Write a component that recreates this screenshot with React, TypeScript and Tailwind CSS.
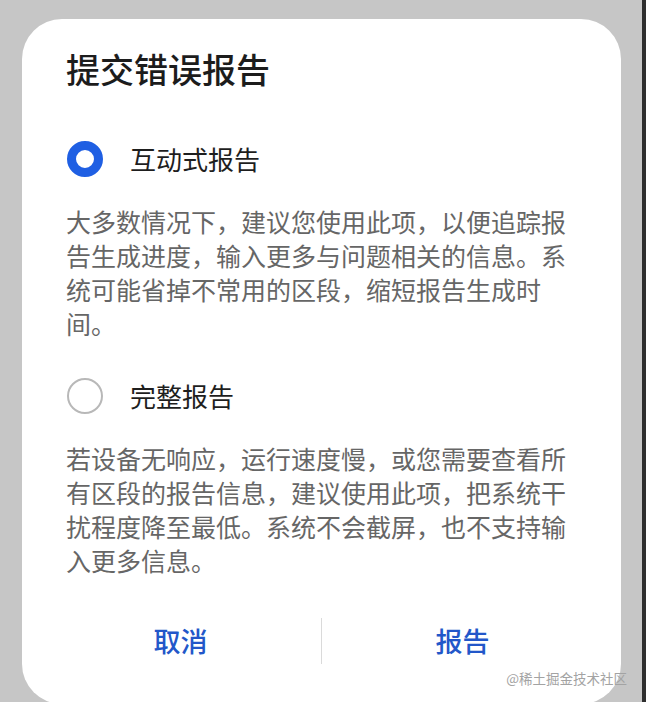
import React, { useState } from "react";

const FONT = { fontFamily: '"Noto Sans CJK SC", "Noto Sans", sans-serif' };

type Option = {
  id: string;
  label: string;
  desc: string;
};

const OPTIONS: Option[] = [
  {
    id: "interactive",
    label: "互动式报告",
    desc: "大多数情况下，建议您使用此项，以便追踪报告生成进度，输入更多与问题相关的信息。系统可能省掉不常用的区段，缩短报告生成时间。",
  },
  {
    id: "full",
    label: "完整报告",
    desc: "若设备无响应，运行速度慢，或您需要查看所有区段的报告信息，建议使用此项，把系统干扰程度降至最低。系统不会截屏，也不支持输入更多信息。",
  },
];

// Radio circle: blue ring when picked, thin grey outline otherwise
function Radio({ checked }: { checked: boolean }) {
  return checked ? (
    <span className="ml-px box-border h-[36px] w-[36px] shrink-0 rounded-full border-[9px] border-[#1f5fe3] bg-white" />
  ) : (
    <span className="ml-px box-border h-[36px] w-[36px] shrink-0 rounded-full border-2 border-[#b8b8b8] bg-white" />
  );
}

export default function App() {
  const [selected, setSelected] = useState("interactive");

  return (
    <div className="relative flex h-[702px] w-[646px] overflow-hidden bg-[#c6c6c6]" style={FONT}>
      <div className="flex flex-1 flex-col">
        {/* divider of the list underneath the dialog */}
        <div className="ml-[43px] mt-[4px] h-px w-[557px] bg-[#b0b0b0]" />

        <div className="ml-[22px] mt-[15px] flex h-[685px] w-[599px] shrink-0 flex-col rounded-[40px] bg-white px-[44px] pt-[29px]">
          <h1 className="text-[34px] font-medium leading-[41px] text-[#1c1c1c]">提交错误报告</h1>

          {OPTIONS.map((opt, i) => (
            <div key={opt.id} className={i === 0 ? "mt-[42px]" : "mt-[28px]"}>
              <button
                type="button"
                onClick={() => setSelected(opt.id)}
                className="flex h-[56px] w-full items-center text-left"
              >
                <Radio checked={selected === opt.id} />
                <span className="ml-[27px] text-[26px] leading-[34px] text-[#1e1e1e]">{opt.label}</span>
              </button>
              <p className="mt-[17px] text-[25px] leading-[34px] text-[#666666]">{opt.desc}</p>
            </div>
          ))}

          <div className="-mx-[26px] mt-[36px] flex h-[56px] items-center">
            <button type="button" className="flex-1 text-[27px] font-medium text-[#2257c9]">
              取消
            </button>
            <div className="h-[46px] w-px bg-[#dadada]" />
            <button type="button" className="flex-1 text-[27px] font-medium text-[#2257c9]">
              报告
            </button>
          </div>
        </div>
      </div>

      <div className="w-[4px] bg-[#2e2e2e]" />

      <span className="absolute bottom-[17px] right-[19px] text-[13.5px] leading-none text-[#a3a3a3]">
        @稀土掘金技术社区
      </span>
    </div>
  );
}
